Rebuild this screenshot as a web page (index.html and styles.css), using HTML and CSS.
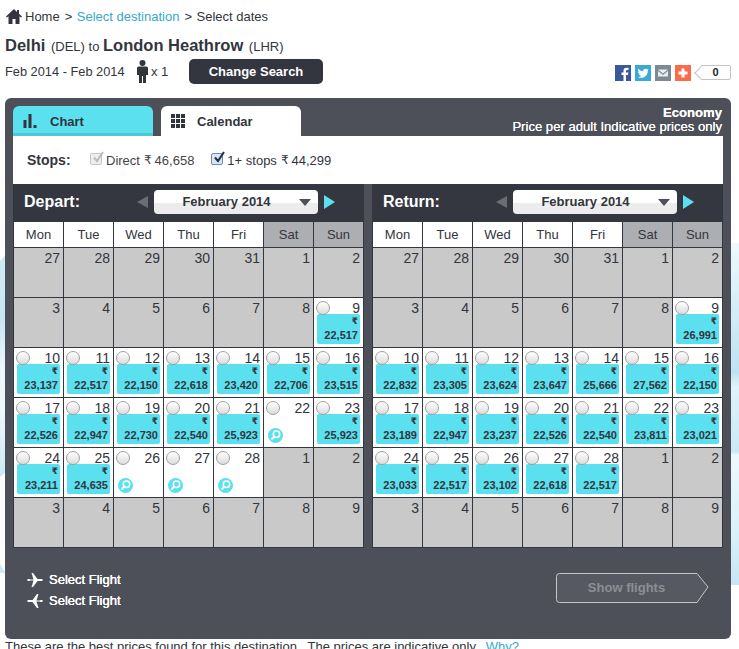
FILE: index.html
```html
<!DOCTYPE html>
<html lang="en">
<head>
<meta charset="utf-8">
<title>Select dates</title>
<link rel="stylesheet" href="styles.css">
</head>
<body>
<div class="wash left"></div>
<div class="wash tip"></div>
<div class="wash right"></div>
<div class="page">
  <nav class="crumbs">
    <svg class="home" viewBox="0 0 16 15"><path d="M8 0 0 7.500 1 8.600 2.500 7.300V15H6.500V10H9.500V15H13.500V7.300L15 8.600 16 7.500 13 4.700V1H11V2.900Z"/></svg>
    <span>Home</span><span class="sep">&gt;</span><a>Select destination</a><span class="sep">&gt;</span><span>Select dates</span>
  </nav>
  <h1 class="route"><b>Delhi</b> <small>(DEL)</small> to <b>London Heathrow</b> <small>(LHR)</small></h1>
  <div class="meta">
    <span class="dates">Feb 2014 - Feb 2014</span>
    <svg class="person" viewBox="0 0 11 23"><circle cx="5.500" cy="3" r="3"/><path d="M1.500 6.500H9.500Q11 6.500 11 8V15H9V23H6V16H5V23H2V15H0V8Q0 6.500 1.500 6.500Z"/></svg>
    <span class="count">x 1</span>
    <button class="change">Change Search</button>
    <div class="share">
      <svg viewBox="0 0 16 16"><rect width="16" height="16" fill="#3b5998"/><path d="M11 16V10H13L13.400 7.500H11V6Q11 5 12.200 5H13.500V2.800H11.500Q8.500 2.800 8.500 5.700V7.500H6.500V10H8.500V16Z" fill="#fff"/></svg>
      <svg viewBox="0 0 16 16"><rect width="16" height="16" fill="#39a9d6"/><path d="M13.500 4.500 12.300 4.900 13.300 3.700 12 4.300C10.500 2.800 7.800 4 8.200 6.200 6.200 6.100 4.500 5.200 3.300 3.800 2.700 5 3 6.300 4 7L3 6.800C3 8 3.800 8.900 5 9.200L4 9.300C4.400 10.300 5.200 10.900 6.300 10.900 5.300 11.700 4.100 12 2.800 11.900 7.800 14.600 13 11 12.700 6Z" fill="#fff"/></svg>
      <svg viewBox="0 0 16 16"><rect width="16" height="16" fill="#7d8a93"/><path d="M3 4.500H13L8 8.500ZM3 6 8 10 13 6V11.500H3Z" fill="#e9ecee"/></svg>
      <svg viewBox="0 0 16 16"><rect width="16" height="16" fill="#fb6a4a"/><path d="M6.500 3.500H9.500V6.500H12.500V9.500H9.500V12.500H6.500V9.500H3.500V6.500H6.500Z" fill="#fff"/></svg>
      <span class="tally">0</span>
    </div>
  </div>

  <section class="panel">
    <div class="tabbar">
      <div class="tab chart">
        <svg viewBox="0 0 13 14"><path d="M0 6H3V14H0ZM5 0H8V14H5ZM10 11H13V14H10Z"/></svg>
        <span>Chart</span>
      </div>
      <div class="tab calendar">
        <svg viewBox="0 0 14 14"><path d="M0 0H4V4H0ZM5 0H9V4H5ZM10 0H14V4H10ZM0 5H4V9H0ZM5 5H9V9H5ZM10 5H14V9H10ZM0 10H4V14H0ZM5 10H9V14H5ZM10 10H14V14H10Z"/></svg>
        <span>Calendar</span>
      </div>
      <div class="fareinfo"><b>Economy</b><span>Price per adult Indicative prices only</span></div>
    </div>

    <div class="stops">
      <strong>Stops:</strong>
      <label class="stop off"><span class="box"><svg viewBox="0 0 14 14"><path d="M3 6.500 6 10 12 1" /></svg></span>Direct <i>₹</i> 46,658</label>
      <label class="stop"><span class="box"><svg viewBox="0 0 14 14"><path d="M3 6.500 6 10 12 1" /></svg></span>1+ stops <i>₹</i> 44,299</label>
    </div>

    <div class="months">
      <div class="month">
        <div class="monthhead">
          <h2>Depart:</h2>
          <span class="prev"></span>
          <div class="picker"><span>February 2014</span><i></i></div>
          <span class="next"></span>
        </div>
        <div class="grid">
          <div class="dow">Mon</div><div class="dow">Tue</div><div class="dow">Wed</div><div class="dow">Thu</div><div class="dow">Fri</div><div class="dow we">Sat</div><div class="dow we">Sun</div>
          <div class="day out"><span class="n">27</span></div><div class="day out"><span class="n">28</span></div><div class="day out"><span class="n">29</span></div><div class="day out"><span class="n">30</span></div><div class="day out"><span class="n">31</span></div><div class="day out"><span class="n">1</span></div><div class="day out"><span class="n">2</span></div>
          <div class="day out"><span class="n">3</span></div><div class="day out"><span class="n">4</span></div><div class="day out"><span class="n">5</span></div><div class="day out"><span class="n">6</span></div><div class="day out"><span class="n">7</span></div><div class="day out"><span class="n">8</span></div>
          <div class="day"><div class="top"><span class="radio"></span><span class="n">9</span></div><div class="fare"><i>₹</i><b>22,517</b></div></div>
          <div class="day"><div class="top"><span class="radio"></span><span class="n">10</span></div><div class="fare"><i>₹</i><b>23,137</b></div></div>
          <div class="day"><div class="top"><span class="radio"></span><span class="n">11</span></div><div class="fare"><i>₹</i><b>22,517</b></div></div>
          <div class="day"><div class="top"><span class="radio"></span><span class="n">12</span></div><div class="fare"><i>₹</i><b>22,150</b></div></div>
          <div class="day"><div class="top"><span class="radio"></span><span class="n">13</span></div><div class="fare"><i>₹</i><b>22,618</b></div></div>
          <div class="day"><div class="top"><span class="radio"></span><span class="n">14</span></div><div class="fare"><i>₹</i><b>23,420</b></div></div>
          <div class="day"><div class="top"><span class="radio"></span><span class="n">15</span></div><div class="fare"><i>₹</i><b>22,706</b></div></div>
          <div class="day"><div class="top"><span class="radio"></span><span class="n">16</span></div><div class="fare"><i>₹</i><b>23,515</b></div></div>
          <div class="day"><div class="top"><span class="radio"></span><span class="n">17</span></div><div class="fare"><i>₹</i><b>22,526</b></div></div>
          <div class="day"><div class="top"><span class="radio"></span><span class="n">18</span></div><div class="fare"><i>₹</i><b>22,947</b></div></div>
          <div class="day"><div class="top"><span class="radio"></span><span class="n">19</span></div><div class="fare"><i>₹</i><b>22,730</b></div></div>
          <div class="day"><div class="top"><span class="radio"></span><span class="n">20</span></div><div class="fare"><i>₹</i><b>22,540</b></div></div>
          <div class="day"><div class="top"><span class="radio"></span><span class="n">21</span></div><div class="fare"><i>₹</i><b>25,923</b></div></div>
          <div class="day"><div class="top"><span class="radio"></span><span class="n">22</span></div><div class="find"><svg viewBox="0 0 15 15"><circle cx="7.500" cy="7.500" r="7.500" fill="#5ae0ee"/><circle cx="8.500" cy="6.200" r="3.200" fill="none" stroke="#fff" stroke-width="1.500"/><path d="M6.200 8.600 3.500 11.500" stroke="#fff" stroke-width="2"/></svg></div></div>
          <div class="day"><div class="top"><span class="radio"></span><span class="n">23</span></div><div class="fare"><i>₹</i><b>25,923</b></div></div>
          <div class="day"><div class="top"><span class="radio"></span><span class="n">24</span></div><div class="fare"><i>₹</i><b>23,211</b></div></div>
          <div class="day"><div class="top"><span class="radio"></span><span class="n">25</span></div><div class="fare"><i>₹</i><b>24,635</b></div></div>
          <div class="day"><div class="top"><span class="radio"></span><span class="n">26</span></div><div class="find"><svg viewBox="0 0 15 15"><circle cx="7.500" cy="7.500" r="7.500" fill="#5ae0ee"/><circle cx="8.500" cy="6.200" r="3.200" fill="none" stroke="#fff" stroke-width="1.500"/><path d="M6.200 8.600 3.500 11.500" stroke="#fff" stroke-width="2"/></svg></div></div>
          <div class="day"><div class="top"><span class="radio"></span><span class="n">27</span></div><div class="find"><svg viewBox="0 0 15 15"><circle cx="7.500" cy="7.500" r="7.500" fill="#5ae0ee"/><circle cx="8.500" cy="6.200" r="3.200" fill="none" stroke="#fff" stroke-width="1.500"/><path d="M6.200 8.600 3.500 11.500" stroke="#fff" stroke-width="2"/></svg></div></div>
          <div class="day"><div class="top"><span class="radio"></span><span class="n">28</span></div><div class="find"><svg viewBox="0 0 15 15"><circle cx="7.500" cy="7.500" r="7.500" fill="#5ae0ee"/><circle cx="8.500" cy="6.200" r="3.200" fill="none" stroke="#fff" stroke-width="1.500"/><path d="M6.200 8.600 3.500 11.500" stroke="#fff" stroke-width="2"/></svg></div></div>
          <div class="day out"><span class="n">1</span></div><div class="day out"><span class="n">2</span></div>
          <div class="day out"><span class="n">3</span></div><div class="day out"><span class="n">4</span></div><div class="day out"><span class="n">5</span></div><div class="day out"><span class="n">6</span></div><div class="day out"><span class="n">7</span></div><div class="day out"><span class="n">8</span></div><div class="day out"><span class="n">9</span></div>
        </div>
      </div>

      <div class="month">
        <div class="monthhead">
          <h2>Return:</h2>
          <span class="prev"></span>
          <div class="picker"><span>February 2014</span><i></i></div>
          <span class="next"></span>
        </div>
        <div class="grid">
          <div class="dow">Mon</div><div class="dow">Tue</div><div class="dow">Wed</div><div class="dow">Thu</div><div class="dow">Fri</div><div class="dow we">Sat</div><div class="dow we">Sun</div>
          <div class="day out"><span class="n">27</span></div><div class="day out"><span class="n">28</span></div><div class="day out"><span class="n">29</span></div><div class="day out"><span class="n">30</span></div><div class="day out"><span class="n">31</span></div><div class="day out"><span class="n">1</span></div><div class="day out"><span class="n">2</span></div>
          <div class="day out"><span class="n">3</span></div><div class="day out"><span class="n">4</span></div><div class="day out"><span class="n">5</span></div><div class="day out"><span class="n">6</span></div><div class="day out"><span class="n">7</span></div><div class="day out"><span class="n">8</span></div>
          <div class="day"><div class="top"><span class="radio"></span><span class="n">9</span></div><div class="fare"><i>₹</i><b>26,991</b></div></div>
          <div class="day"><div class="top"><span class="radio"></span><span class="n">10</span></div><div class="fare"><i>₹</i><b>22,832</b></div></div>
          <div class="day"><div class="top"><span class="radio"></span><span class="n">11</span></div><div class="fare"><i>₹</i><b>23,305</b></div></div>
          <div class="day"><div class="top"><span class="radio"></span><span class="n">12</span></div><div class="fare"><i>₹</i><b>23,624</b></div></div>
          <div class="day"><div class="top"><span class="radio"></span><span class="n">13</span></div><div class="fare"><i>₹</i><b>23,647</b></div></div>
          <div class="day"><div class="top"><span class="radio"></span><span class="n">14</span></div><div class="fare"><i>₹</i><b>25,666</b></div></div>
          <div class="day"><div class="top"><span class="radio"></span><span class="n">15</span></div><div class="fare"><i>₹</i><b>27,562</b></div></div>
          <div class="day"><div class="top"><span class="radio"></span><span class="n">16</span></div><div class="fare"><i>₹</i><b>22,150</b></div></div>
          <div class="day"><div class="top"><span class="radio"></span><span class="n">17</span></div><div class="fare"><i>₹</i><b>23,189</b></div></div>
          <div class="day"><div class="top"><span class="radio"></span><span class="n">18</span></div><div class="fare"><i>₹</i><b>22,947</b></div></div>
          <div class="day"><div class="top"><span class="radio"></span><span class="n">19</span></div><div class="fare"><i>₹</i><b>23,237</b></div></div>
          <div class="day"><div class="top"><span class="radio"></span><span class="n">20</span></div><div class="fare"><i>₹</i><b>22,526</b></div></div>
          <div class="day"><div class="top"><span class="radio"></span><span class="n">21</span></div><div class="fare"><i>₹</i><b>22,540</b></div></div>
          <div class="day"><div class="top"><span class="radio"></span><span class="n">22</span></div><div class="fare"><i>₹</i><b>23,811</b></div></div>
          <div class="day"><div class="top"><span class="radio"></span><span class="n">23</span></div><div class="fare"><i>₹</i><b>23,021</b></div></div>
          <div class="day"><div class="top"><span class="radio"></span><span class="n">24</span></div><div class="fare"><i>₹</i><b>23,033</b></div></div>
          <div class="day"><div class="top"><span class="radio"></span><span class="n">25</span></div><div class="fare"><i>₹</i><b>22,517</b></div></div>
          <div class="day"><div class="top"><span class="radio"></span><span class="n">26</span></div><div class="fare"><i>₹</i><b>23,102</b></div></div>
          <div class="day"><div class="top"><span class="radio"></span><span class="n">27</span></div><div class="fare"><i>₹</i><b>22,618</b></div></div>
          <div class="day"><div class="top"><span class="radio"></span><span class="n">28</span></div><div class="fare"><i>₹</i><b>22,517</b></div></div>
          <div class="day out"><span class="n">1</span></div><div class="day out"><span class="n">2</span></div>
          <div class="day out"><span class="n">3</span></div><div class="day out"><span class="n">4</span></div><div class="day out"><span class="n">5</span></div><div class="day out"><span class="n">6</span></div><div class="day out"><span class="n">7</span></div><div class="day out"><span class="n">8</span></div><div class="day out"><span class="n">9</span></div>
        </div>
      </div>
    </div>

    <div class="foot">
      <div class="legs">
        <div class="leg"><svg viewBox="0 0 16 14"><path d="M0 6 2 6 3.500 6.500H6.500L4.500 0H6L10.500 6H14.500Q16 6.300 16 7T14.500 8H10.500L6 14H4.500L6.500 7.500H3.500L2 8H0L1 7Z"/></svg>Select Flight</div>
        <div class="leg"><svg class="flip" viewBox="0 0 16 14"><path d="M0 6 2 6 3.500 6.500H6.500L4.500 0H6L10.500 6H14.500Q16 6.300 16 7T14.500 8H10.500L6 14H4.500L6.500 7.500H3.500L2 8H0L1 7Z"/></svg>Select Flight</div>
      </div>
      <button class="show">
        <svg viewBox="0 0 153 30"><path d="M3.500 .5H141L152 14 141 29.500H3.500Q.5 29.500 .5 26.500V3.500Q.5 .5 3.500 .5Z"/></svg>
        <span>Show flights</span>
      </button>
    </div>
  </section>

  <p class="note">These are the best prices found for this destination.&nbsp; The prices are indicative only.&nbsp; <a>Why?</a></p>
</div>
</body>
</html>
```
FILE: styles.css
```css
* { box-sizing: border-box; }
html, body { margin: 0; height: 649px; overflow: hidden; background: #fff; }
body { position: relative; font-family: "Liberation Sans", Arial, sans-serif; color: #33353d; font-size: 13px; }
a { color: #38a7cb; }

.wash { position: absolute; width: 8px; }
.wash.left { left: 0; top: 252px; height: 225px; background: linear-gradient(180deg, #cfe9f5 0%, #c8e7f3 30%, #eaf7fc 50%, #eef9fd 70%, #cbe8f4 100%); clip-path: polygon(0 4%, 100% 0, 100% 97%, 0 100%); }
.wash.tip { left: 0; top: 564px; height: 9px; background: #cfe9f5; clip-path: polygon(0 0, 70% 100%, 0 100%); }
.wash.right { right: 0; top: 243px; height: 342px; background: linear-gradient(180deg, #eef9fd 0%, #c6e7f3 30%, #bfe3f2 38%, #dff3fa 42%, #cbe9f5 61%, #eef9fd 62%, #d9f1f9 85%, #c5e6f3 100%); }

.page { position: relative; padding: 8px 8px 0 5px; }

.crumbs { display: flex; align-items: center; height: 17px; font-size: 13px; }
.home { width: 16px; height: 15px; margin: 0 3px 0 1px; fill: #33353d; }
.sep { margin: 0 4.500px 0 5px; }

.route { margin: 9px 0 0; height: 22px; font-size: 13px; font-weight: normal; line-height: 22px; white-space: nowrap; }
.route b { font-size: 16.500px; }
.route small { font-size: 13px; margin-left: 2px; }

.meta { display: flex; align-items: center; height: 26px; margin-top: 2px; width: 726px; }
.dates { width: 131px; font-size: 12.800px; white-space: nowrap; }
.person { width: 11px; height: 23px; fill: #33353d; margin-left: 1px; }
.count { margin-left: 3px; width: 18px; font-size: 13px; }
.change { margin-left: 20px; width: 134px; height: 25px; border: 0; border-radius: 5px; background: #33353f; color: #fff; font: bold 13px "Liberation Sans", Arial, sans-serif; }
.share { margin: 3px 0 0 auto; display: flex; align-items: center; gap: 4px; }
.share svg { width: 16px; height: 16px; display: block; }
.tally { position: relative; width: 31px; height: 15px; margin-left: 5px; border: 1px solid #c4c4c4; border-radius: 2px; background: #fff; font-size: 11px; line-height: 13px; text-align: center; color: #222; font-weight: bold; }
.tally::before { content: ""; position: absolute; left: -5px; top: 3px; width: 7px; height: 7px; border-left: 1px solid #c4c4c4; border-bottom: 1px solid #c4c4c4; background: #fff; transform: rotate(45deg); }

.panel { width: 726px; height: 541px; margin-top: 14px; padding: 8px 8px 0; background: #4e5059; border-radius: 6px; }

.tabbar { display: flex; height: 30px; }
.tab { width: 140px; height: 30px; margin-right: 8px; padding-left: 10px; display: flex; align-items: center; gap: 13px; border-radius: 6px 6px 0 0; font-size: 13px; font-weight: bold; color: #33353d; }
.tab svg { width: 14px; height: 14px; fill: #33353d; }
.tab.chart { background: linear-gradient(180deg, #5ae0ee 90%, #4ec8d4 90%); }
.tab.calendar { background: #fff; gap: 12px; }
.fareinfo { margin-left: auto; padding-right: 1px; display: flex; flex-direction: column; align-items: flex-end; color: #fff; font-size: 13.100px; line-height: 14px; text-shadow: 0 0 .5px #fff; }

.stops { display: flex; align-items: center; height: 48px; padding-left: 14px; background: #fff; font-size: 13px; }
.stops strong { width: 63px; font-size: 14px; color: #33353d; }
.stop { display: flex; align-items: center; margin-right: 17px; }
.stop i { font-style: normal; font-family: "DejaVu Sans", sans-serif; margin: 0 3px 0 4px; font-size: 12px; }
.box { width: 12px; height: 12px; margin: 0 4px 3px 0; border: 1px solid #6c8fb3; border-radius: 2px; background: #d6e6f4; position: relative; }
.box svg { position: absolute; left: 0; top: -3px; width: 14px; height: 14px; fill: none; stroke: #22303f; stroke-width: 2; }
.stop.off { color: #444; }
.stop.off .box { border-color: #c6c6c6; background: #eee; }
.stop.off .box svg { stroke: #bbb; }

.months { display: flex; justify-content: space-between; }
.month { width: 351px; background: #343640; }
.monthhead { display: flex; align-items: center; height: 37px; padding-bottom: 1px; }
.monthhead h2 { margin: 0; width: 124px; padding-left: 11px; font-size: 16px; color: #fff; font-weight: bold; }
.prev { width: 0; height: 0; border: 6.500px solid transparent; border-left-width: 0; border-right: 11px solid #6c6d72; margin-right: 6px; }
.next { width: 0; height: 0; border: 7px solid transparent; border-right-width: 0; border-left: 11px solid #5ae0ee; margin-left: 6px; }
.picker { position: relative; width: 164px; height: 24px; border-radius: 4px; background: linear-gradient(180deg, #fff 55%, #ececec 55%); text-align: center; font-size: 13px; font-weight: bold; line-height: 23px; color: #33353d; padding-right: 19px; }
.picker i { position: absolute; right: 7px; top: 9px; width: 0; height: 0; border: 6.500px solid transparent; border-bottom-width: 0; border-top: 7px solid #4e5059; }

.grid { display: grid; grid-template-columns: repeat(7, 49px); grid-template-rows: 25px repeat(6, 49px); gap: 1px; padding: 1px; width: 351px; background: #343640; }
.dow { background: #fff; text-align: center; font-size: 13px; line-height: 25px; }
.dow.we { background: #adaeb1; }
.day { position: relative; background: #fff; padding: 0 3px; }
.day.out { background: #c9c9c9; text-align: right; }
.n { display: block; font-size: 14px; line-height: 21px; }
.top { display: flex; justify-content: space-between; height: 16px; }
.radio { width: 14px; height: 14px; margin: 3px 0 0 -1px; border: 1px solid #a0a0a0; border-radius: 50%; background: linear-gradient(180deg, #fff, #dcdcdc); }
.fare { display: flex; flex-direction: column; align-items: flex-end; height: 30px; padding: 0 2px; border-radius: 2px; background: #5ae0ee; color: #33353d; font-size: 11px; line-height: 15px; }
.fare i { font: normal bold 9px/14px "DejaVu Sans", sans-serif; }
.fare b { font-size: 11px; }
.find { padding: 14px 0 0 1px; }
.find svg { display: block; width: 15px; height: 15px; }

.foot { display: flex; justify-content: space-between; padding: 25px 14px 0 14px; }
.legs { display: flex; flex-direction: column; gap: 6px; margin-top: -1px; }
.leg { display: flex; align-items: center; gap: 6px; height: 15px; color: #fff; font-size: 13px; text-shadow: 0 0 .6px #fff, 0 0 .6px #fff; }
.leg svg { width: 16px; height: 14px; fill: #fff; }
.leg svg.flip { transform: scaleX(-1); }
.show { position: relative; width: 153px; height: 30px; padding: 0 12px 2px 0; border: 0; background: none; color: #8d8e94; font: bold 13px "Liberation Sans", Arial, sans-serif; }
.show svg { position: absolute; left: 0; top: 0; width: 153px; height: 30px; fill: #575962; stroke: #c8c8c8; }
.show span { position: relative; }

.note { margin: 0; font-size: 13px; line-height: 16px; white-space: nowrap; }
```
